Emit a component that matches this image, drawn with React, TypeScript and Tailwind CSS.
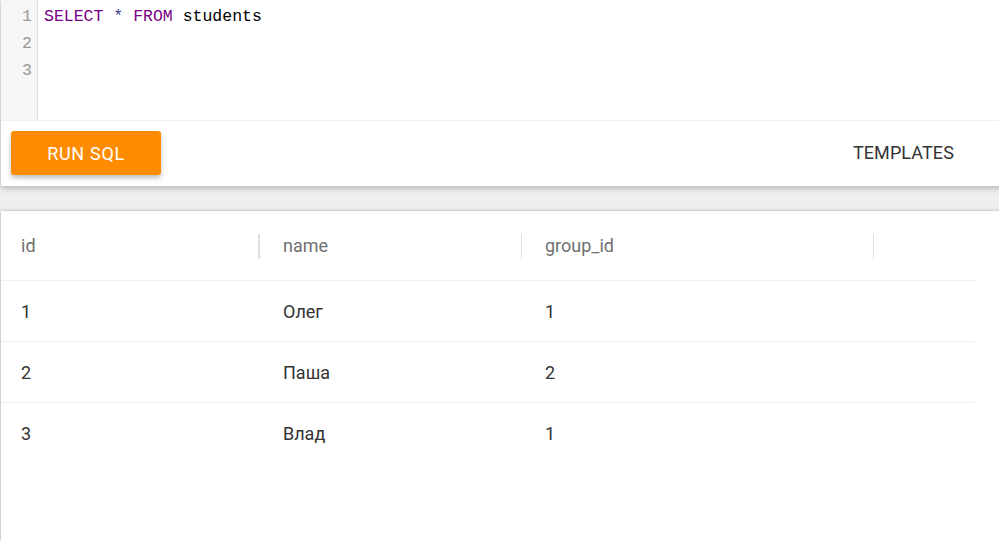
import React from "react";

const rows = [
  { id: "1", name: "Олег", group: "1" },
  { id: "2", name: "Паша", group: "2" },
  { id: "3", name: "Влад", group: "1" },
];

export default function App() {
  return (
    <div
      className="w-[999px] h-[541px] overflow-hidden bg-[#eeeeee] flex flex-col"
      style={{ fontFamily: "Roboto, 'Noto Sans', sans-serif" }}
    >
      {/* Editor card */}
      <div className="ml-[1px] mr-[-6px] bg-white shadow-[0_2px_6px_rgba(0,0,0,0.25)] rounded-b-[2px] flex flex-col">
        <div className="h-[121px] flex border-b border-[#eeeeee]">
          <div
            className="w-[37px] bg-[#f7f7f7] border-r border-[#dddddd] pt-[3px] pr-[5px] text-right text-[#999999] text-[16.5px] leading-[27px]"
            style={{ fontFamily: "'Liberation Mono', monospace" }}
          >
            <div>1</div>
            <div>2</div>
            <div>3</div>
          </div>
          <div
            className="pl-[6px] pt-[3px] text-[16.5px] leading-[27px] text-black"
            style={{ fontFamily: "'Liberation Mono', monospace" }}
          >
            <div>
              <span className="text-[#770088]">SELECT</span>{" "}
              <span className="text-[#3a3a8a]">*</span>{" "}
              <span className="text-[#770088]">FROM</span> students
            </div>
          </div>
        </div>
        <div className="h-[65px] flex items-start justify-between pt-[10px] pl-[10px] pr-[51px]">
          <button className="w-[150px] h-[44px] bg-[#ff8c00] text-white text-[18px] rounded-[3px] shadow-[0_3px_5px_rgba(0,0,0,0.25)] tracking-[0.7px]">
            RUN SQL
          </button>
          <button className="h-[43px] text-[18px] text-[#333333] tracking-[0.1px]">
            TEMPLATES
          </button>
        </div>
      </div>

      {/* Table card */}
      <div className="mt-[25px] ml-[1px] mr-[-6px] flex-1 bg-white shadow-[0_0_3px_rgba(0,0,0,0.3)]">
        <div className="w-[975px]">
          <div className="h-[70px] flex items-center border-b border-[#eeeeee] text-[18px] text-[#707070]">
            <div className="w-[261px] h-full flex items-center pl-[20px] relative">
              id
              <span className="absolute right-[2px] top-[23px] h-[25px] w-[2px] bg-[#e0e0e0]" />
            </div>
            <div className="w-[261px] h-full flex items-center pl-[21px] relative">
              name
              <span className="absolute right-[1px] top-[23px] h-[25px] w-[1px] bg-[#e0e0e0]" />
            </div>
            <div className="w-[352px] h-full flex items-center pl-[22px] relative">
              group_id
              <span className="absolute right-[1px] top-[23px] h-[25px] w-[1px] bg-[#e0e0e0]" />
            </div>
          </div>
          {rows.map((r, i) => (
            <div
              key={r.id}
              className={`h-[61px] w-[973px] flex items-center text-[18px] text-[#333333] ${
                i < rows.length - 1 ? "border-b border-[#eeeeee]" : ""
              }`}
            >
              <div className="w-[261px] pl-[20px]">{r.id}</div>
              <div className="w-[261px] pl-[21px]">{r.name}</div>
              <div className="w-[352px] pl-[22px]">{r.group}</div>
            </div>
          ))}
        </div>
      </div>
    </div>
  );
}
